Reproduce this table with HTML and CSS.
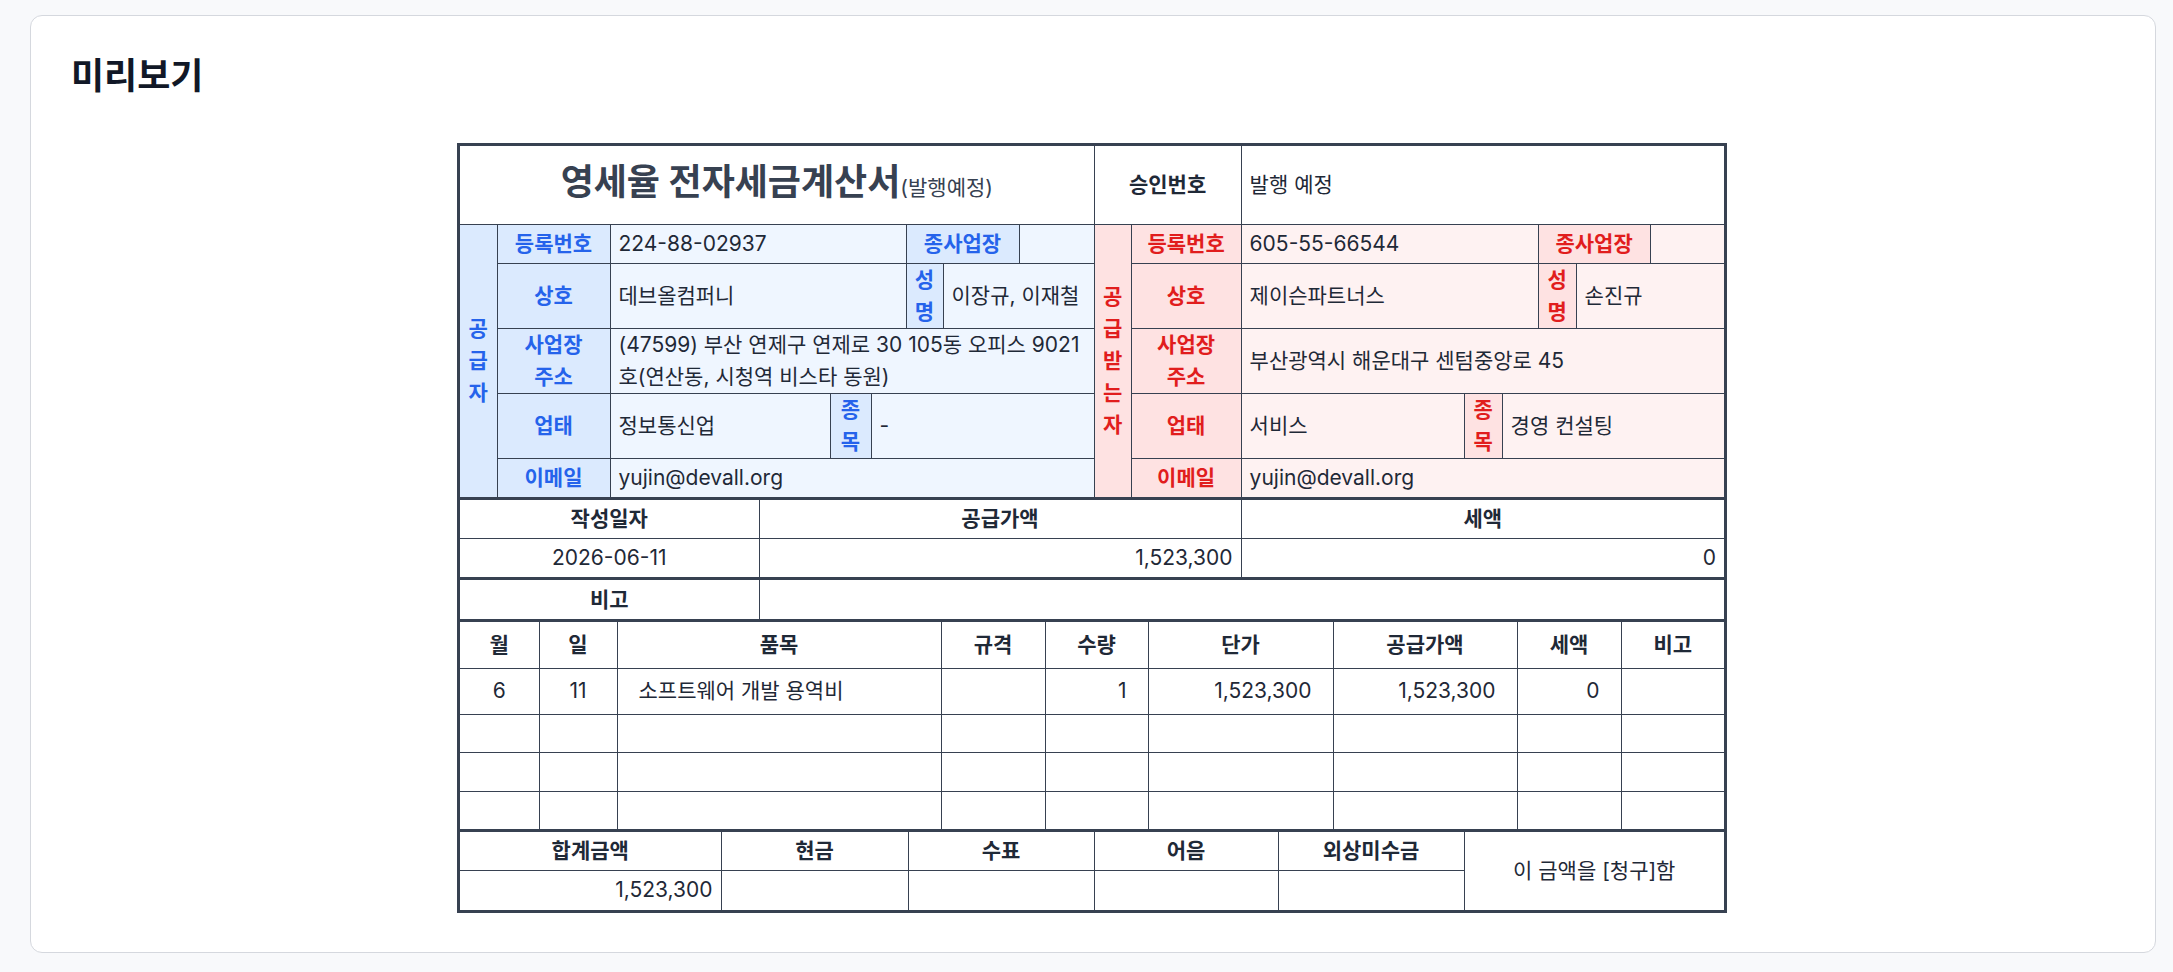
FILE: index.html
```html
<!DOCTYPE html>
<html lang="ko">
<head>
<meta charset="utf-8">
<title>미리보기</title>
<link rel="stylesheet" href="styles.css">
</head>
<body>
<div class="card">
  <h1 class="page-title">미리보기</h1>
  <div class="invoice">
    <div class="sec">
      <table class="grid party">
        <colgroup>
          <col class="w37"><col class="w113"><col class="w220"><col class="w41"><col class="w35"><col class="w37"><col class="w76"><col class="w75">
          <col class="w37"><col class="w110"><col class="w223"><col class="w38"><col class="w36"><col class="w38"><col class="w74"><col class="w74">
        </colgroup>
        <tr class="h78">
          <td colspan="8" class="doc-title">영세율 전자세금계산서<span class="doc-sub">(발행예정)</span></td>
          <th colspan="2" class="head">승인번호</th>
          <td colspan="6" class="val">발행 예정</td>
        </tr>
        <tr class="h39">
          <th rowspan="5" class="vert sup-lab"><span class="vtext">공급자</span></th>
          <th class="lab sup-lab">등록번호</th>
          <td colspan="3" class="val sup-val">224-88-02937</td>
          <th colspan="2" class="lab sup-lab">종사업장</th>
          <td class="val sup-val"></td>
          <th rowspan="5" class="vert rec-lab"><span class="vtext">공급받는자</span></th>
          <th class="lab rec-lab">등록번호</th>
          <td colspan="3" class="val rec-val">605-55-66544</td>
          <th colspan="2" class="lab rec-lab">종사업장</th>
          <td class="val rec-val"></td>
        </tr>
        <tr class="h65">
          <th class="lab sup-lab">상호</th>
          <td colspan="3" class="val sup-val">데브올컴퍼니</td>
          <th class="lab stack sup-lab"><span class="vtext">성명</span></th>
          <td colspan="2" class="val sup-val">이장규, 이재철</td>
          <th class="lab rec-lab">상호</th>
          <td colspan="3" class="val rec-val">제이슨파트너스</td>
          <th class="lab stack rec-lab"><span class="vtext">성명</span></th>
          <td colspan="2" class="val rec-val">손진규</td>
        </tr>
        <tr class="h65">
          <th class="lab sup-lab">사업장<br>주소</th>
          <td colspan="6" class="val sup-val">(47599) 부산 연제구 연제로 30 105동 오피스 9021 호(연산동, 시청역 비스타 동원)</td>
          <th class="lab rec-lab">사업장<br>주소</th>
          <td colspan="6" class="val rec-val">부산광역시 해운대구 센텀중앙로 45</td>
        </tr>
        <tr class="h65">
          <th class="lab sup-lab">업태</th>
          <td class="val sup-val">정보통신업</td>
          <th class="lab stack sup-lab"><span class="vtext">종목</span></th>
          <td colspan="4" class="val sup-val">-</td>
          <th class="lab rec-lab">업태</th>
          <td class="val rec-val">서비스</td>
          <th class="lab stack rec-lab"><span class="vtext">종목</span></th>
          <td colspan="4" class="val rec-val">경영 컨설팅</td>
        </tr>
        <tr class="h39">
          <th class="lab sup-lab">이메일</th>
          <td colspan="6" class="val sup-val">yujin@devall.org</td>
          <th class="lab rec-lab">이메일</th>
          <td colspan="6" class="val rec-val">yujin@devall.org</td>
        </tr>
      </table>
    </div>

    <div class="sec">
      <table class="grid">
        <colgroup><col class="w299"><col class="w482"><col class="w483"></colgroup>
        <tr class="h38">
          <th class="head">작성일자</th>
          <th class="head">공급가액</th>
          <th class="head">세액</th>
        </tr>
        <tr class="h39">
          <td class="center">2026-06-11</td>
          <td class="right">1,523,300</td>
          <td class="right">0</td>
        </tr>
      </table>
    </div>

    <div class="sec">
      <table class="grid">
        <colgroup><col class="w299"><col class="w965"></colgroup>
        <tr class="h39">
          <th class="head">비고</th>
          <td></td>
        </tr>
      </table>
    </div>

    <div class="sec">
      <table class="grid items">
        <colgroup>
          <col class="w79"><col class="w78"><col class="w324"><col class="w104"><col class="w103"><col class="w185"><col class="w184"><col class="w104"><col class="w103">
        </colgroup>
        <tr class="h46">
          <th class="head">월</th>
          <th class="head">일</th>
          <th class="head">품목</th>
          <th class="head">규격</th>
          <th class="head">수량</th>
          <th class="head">단가</th>
          <th class="head">공급가액</th>
          <th class="head">세액</th>
          <th class="head">비고</th>
        </tr>
        <tr class="h46">
          <td class="center">6</td>
          <td class="center">11</td>
          <td>소프트웨어 개발 용역비</td>
          <td></td>
          <td class="right">1</td>
          <td class="right">1,523,300</td>
          <td class="right">1,523,300</td>
          <td class="right">0</td>
          <td></td>
        </tr>
        <tr class="h38"><td></td><td></td><td></td><td></td><td></td><td></td><td></td><td></td><td></td></tr>
        <tr class="h39"><td></td><td></td><td></td><td></td><td></td><td></td><td></td><td></td><td></td></tr>
        <tr class="h38"><td></td><td></td><td></td><td></td><td></td><td></td><td></td><td></td><td></td></tr>
      </table>
    </div>

    <div class="sec">
      <table class="grid">
        <colgroup>
          <col class="w261"><col class="w187"><col class="w186"><col class="w184"><col class="w186"><col class="w260">
        </colgroup>
        <tr class="h38">
          <th class="head">합계금액</th>
          <th class="head">현금</th>
          <th class="head">수표</th>
          <th class="head">어음</th>
          <th class="head">외상미수금</th>
          <td rowspan="2" class="center claim">이 금액을 [청구]함</td>
        </tr>
        <tr class="h40">
          <td class="right">1,523,300</td>
          <td></td>
          <td></td>
          <td></td>
          <td></td>
        </tr>
      </table>
    </div>
  </div>
</div>
</body>
</html>
```

FILE: styles.css
```css
* {
  box-sizing: border-box;
}

html,
body {
  margin: 0;
}

body {
  background: #f8f9fb;
  padding: 15px 17px 8px 30px;
  font-family: Inter, "Noto Sans CJK KR", sans-serif;
  color: #1f2937;
}

.card {
  background: #ffffff;
  border: 1px solid #d5d8de;
  border-radius: 12px;
  padding: 40px 42px 39px 40px;
}

.page-title {
  margin: 0 0 47px;
  font-size: 36px;
  line-height: 40px;
  font-weight: 700;
  color: #111827;
}

.invoice {
  width: 1270px;
  margin: 0 auto;
  border: 3px solid #374151;
  background: #ffffff;
}

.sec + .sec {
  border-top: 3px solid #374151;
}

.grid {
  width: 100%;
  border-collapse: collapse;
  border-style: hidden;
  table-layout: fixed;
}

.grid td,
.grid th {
  border: 1px solid #374151;
  padding: 0 8px;
  font-size: 21px;
  line-height: 32px;
  vertical-align: middle;
  text-align: left;
  font-weight: 400;
  color: #1f2937;
}

.grid th.head {
  text-align: center;
  font-weight: 600;
  color: #1f2937;
}

.grid .center {
  text-align: center;
}

.grid .right {
  text-align: right;
}

.items td {
  padding: 0 21px;
}

.items th {
  padding: 0 4px;
}

/* row heights */
.h78 { height: 78px; }
.h65 { height: 65px; }
.h46 { height: 46px; }
.h40 { height: 40px; }
.h39 { height: 39px; }
.h38 { height: 38px; }

/* column widths */
.w35 { width: 35px; }
.w36 { width: 36px; }
.w37 { width: 37px; }
.w38 { width: 38px; }
.w41 { width: 41px; }
.w74 { width: 74px; }
.w75 { width: 75px; }
.w76 { width: 76px; }
.w78 { width: 78px; }
.w79 { width: 79px; }
.w103 { width: 103px; }
.w104 { width: 104px; }
.w110 { width: 110px; }
.w113 { width: 113px; }
.w184 { width: 184px; }
.w185 { width: 185px; }
.w186 { width: 186px; }
.w187 { width: 187px; }
.w220 { width: 220px; }
.w223 { width: 223px; }
.w260 { width: 260px; }
.w261 { width: 261px; }
.w299 { width: 299px; }
.w324 { width: 324px; }
.w482 { width: 482px; }
.w483 { width: 483px; }
.w965 { width: 965px; }

/* invoice header */
.grid td.doc-title {
  text-align: center;
  font-size: 36px;
  font-weight: 700;
  color: #374151;
}

.doc-sub {
  font-size: 21px;
  font-weight: 400;
}

/* party blocks */
.grid th.lab {
  text-align: center;
  font-weight: 700;
  padding: 0 4px;
}

.grid th.stack,
.grid th.vert {
  padding: 0;
}

.vtext {
  display: block;
  width: 1em;
  margin: 0 auto;
  word-break: break-all;
  text-align: center;
}

.grid .sup-lab {
  background: #dbeafe;
  color: #2563eb;
}

.grid .sup-val {
  background: #eff6ff;
}

.grid .rec-lab {
  background: #fee2e2;
  color: #e11d1d;
}

.grid .rec-val {
  background: #fef2f2;
}

.grid th.vert {
  font-weight: 700;
  text-align: center;
}

.grid .val {
  color: #1f2937;
}

.claim {
  color: #374151;
}
```
